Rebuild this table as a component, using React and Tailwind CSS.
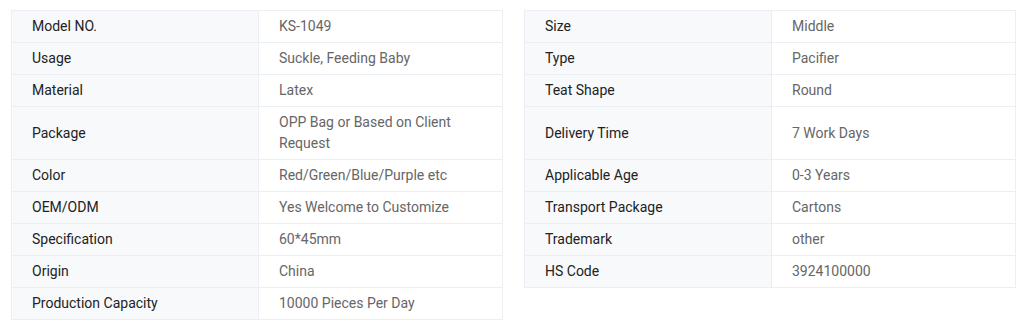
const left = [
  ["Model NO.", "KS-1049"],
  ["Usage", "Suckle, Feeding Baby"],
  ["Material", "Latex"],
  ["Package", "OPP Bag or Based on Client Request"],
  ["Color", "Red/Green/Blue/Purple etc"],
  ["OEM/ODM", "Yes Welcome to Customize"],
  ["Specification", "60*45mm"],
  ["Origin", "China"],
  ["Production Capacity", "10000 Pieces Per Day"],
];

const right = [
  ["Size", "Middle"],
  ["Type", "Pacifier"],
  ["Teat Shape", "Round"],
  ["Delivery Time", "7 Work Days", true],
  ["Applicable Age", "0-3 Years"],
  ["Transport Package", "Cartons"],
  ["Trademark", "other"],
  ["HS Code", "3924100000"],
];

function SpecTable({ rows }) {
  return (
    <div className="w-[492px] border-t border-l border-r border-[#ebeef2]">
      {rows.map(([k, v, tall]) => (
        <div key={k} className="flex border-b border-[#ebeef2]">
          <div className="w-[247px] shrink-0 bg-[#f8f9fb] border-r border-[#ebeef2] px-5 py-[5px] leading-[21px] text-[#222] flex items-center">
            {k}
          </div>
          <div className={"flex-1 px-5 py-[5px] leading-[21px] text-[#666] flex items-center " + (tall ? "min-h-[52px]" : "")}>
            {v}
          </div>
        </div>
      ))}
    </div>
  );
}

export default function App() {
  return (
    <div className="w-[1024px] h-[326px] bg-white pt-[10px] pl-[11px] flex items-start gap-[21px] text-[14px]" style={{ fontFamily: "Roboto, 'Liberation Sans', sans-serif" }}>
      <SpecTable rows={left} />
      <SpecTable rows={right} />
    </div>
  );
}
